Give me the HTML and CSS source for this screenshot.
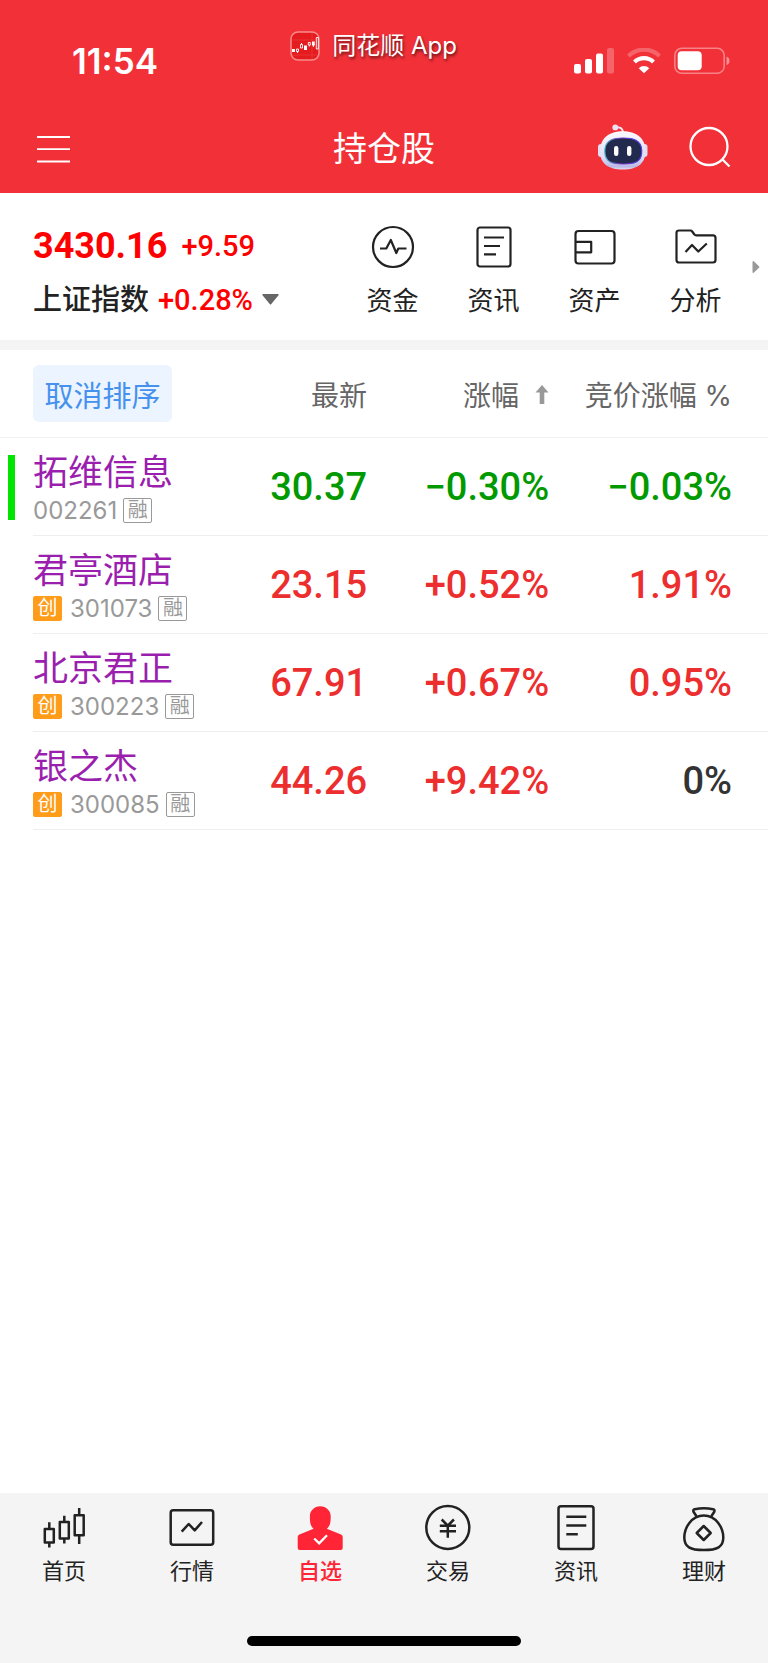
FILE: index.html
```html
<!doctype html>
<html lang="zh-CN">
<head>
	<meta charset="UTF-8">
	<meta name="viewport" content="width=device-width, initial-scale=1">
	<title>持仓股</title>
	<link rel="stylesheet" href="styles.css">
</head>
<body>
	<header class="header">
		<div class="status">
			<span class="status-time">11:54</span>
			<div class="status-app">
				<svg class="app-icon" width="30" height="30" viewBox="0 0 30 30" fill="none">
					<rect x="1" y="1" width="28" height="28" rx="7" fill="#e51c1f" stroke="#f98a8c" stroke-width="1.5"/>
					<path d="M2 9h26M2 24h26M22 2v26" stroke="#ee4446" stroke-width=".5"/>
					<path d="M2 18h3v3H2zM14 14.500h3v4.500h-3zM22 10.500h2.800v4H22z" fill="#fff"/>
					<path d="M6.500 18h2v2.500h-2zM10.500 13.500h2v3.500h-2zM18.300 11.500h2v2.500h-2zM26.300 6.500h2v11.500h-2zM7.500 20.500v1.500M11.500 12v1.500M19.300 14v1.500M23.400 14v2" stroke="#fff" stroke-width=".9"/>
				</svg>
				<span>同花顺 App</span>
			</div>
			<div class="status-icons">
				<svg width="40" height="26" viewBox="0 0 40 26" fill="#fff">
					<rect x="0" y="16" width="7" height="9.500" rx="2"/>
					<rect x="11" y="11" width="7" height="14.500" rx="2"/>
					<rect x="22" y="5.500" width="7" height="20" rx="2"/>
					<rect x="33" y="0" width="7" height="25.500" rx="2" opacity=".25"/>
				</svg>
				<svg width="34" height="26" viewBox="0 0 34 26" fill="none" stroke="#fff" stroke-width="4.200">
					<path d="M1.500 8a22 22 0 0 1 31 0" opacity=".25"/>
					<path d="M7.500 14a13.500 13.500 0 0 1 19 0"/>
					<path d="M17 25.300l-5.300-5.100a7.600 7.600 0 0 1 10.600 0z" fill="#fff" stroke="none"/>
				</svg>
				<svg width="56" height="28" viewBox="0 0 56 28">
					<rect x=".8" y="1.300" width="49.400" height="25" rx="7" fill="none" stroke="#fff" stroke-opacity=".4" stroke-width="1.600"/>
					<rect x="3.700" y="4.200" width="24" height="19" rx="4" fill="#fff"/>
					<path d="M52.500 9.500q3 1 3 4.300t-3 4.300z" fill="#fff" opacity=".45"/>
				</svg>
			</div>
		</div>
		<div class="navbar">
			<button type="button" class="icon-btn" aria-label="菜单">
				<svg width="33" height="28" viewBox="0 0 33 28" stroke="#fff" stroke-width="1.800">
					<path d="M0 2h33M0 14.200h33M0 26.500h33"/>
				</svg>
			</button>
			<h1 class="title">持仓股</h1>
			<div class="navbar-right">
				<button type="button" class="icon-btn" aria-label="智能助手">
					<svg width="50" height="46" viewBox="0 0 50 46">
						<defs>
							<linearGradient id="shell" x1="0" y1="0" x2="0" y2="1">
								<stop offset="0" stop-color="#fbfaff"/>
								<stop offset=".7" stop-color="#dcdcf5"/>
								<stop offset=".93" stop-color="#b9b9e6"/>
								<stop offset="1" stop-color="#e3e2f6"/>
							</linearGradient>
							<linearGradient id="rim" x1="0" y1="0" x2="1" y2="0">
								<stop offset="0" stop-color="#48b8c8"/>
								<stop offset=".4" stop-color="#7a35c4"/>
								<stop offset="1" stop-color="#5040e8"/>
							</linearGradient>
						</defs>
						<path d="M18.500 3.200q6.500-.5 6.500 6" fill="none" stroke="#f1e6f5" stroke-width="2"/>
						<circle cx="17.300" cy="3.400" r="2.900" fill="#ece2f5"/>
						<rect x="0" y="20" width="6" height="13" rx="3" fill="#dfdef4"/>
						<rect x="43.500" y="20" width="6" height="13" rx="3" fill="#dfdef4"/>
						<path d="M24.800 7.200C38 7.200 47.500 14 47.500 27S39 45.500 24.800 45.500 2 40 2 27 11.500 7.200 24.800 7.200z" fill="url(#shell)"/>
						<path d="M25.300 14c9 0 18.500 1.500 18.500 13s-7.300 13-18.500 13S6.800 38.500 6.800 27s9.200-13 18.500-13z" fill="#222b4e" stroke="url(#rim)" stroke-width="1.200"/>
						<rect x="16" y="22" width="4.400" height="10" rx="2.200" fill="#fff"/>
						<rect x="29" y="22" width="4.400" height="10" rx="2.200" fill="#fff"/>
					</svg>
				</button>
				<button type="button" class="icon-btn" aria-label="搜索">
					<svg width="42" height="42" viewBox="0 0 42 42" fill="none" stroke="#fff" stroke-width="2.300">
						<circle cx="20" cy="20.500" r="18.500"/>
						<path d="M33 33l7.500 7.500"/>
					</svg>
				</button>
			</div>
		</div>
	</header>

	<main class="main">
		<section class="summary">
			<div class="index">
				<p class="index-line"><strong class="index-value">3430.16</strong><span class="index-diff">+9.59</span></p>
				<button type="button" class="index-line index-switch">
					<span class="index-name">上证指数</span>
					<span class="index-diff">+0.28%</span>
					<svg width="17" height="11" viewBox="0 0 17 11" fill="#666"><path d="M1 0h15q1.200.2.500 1.200L9.300 10q-.8 1-1.600 0L.5 1.200Q0 .2 1 0z"/></svg>
				</button>
			</div>
			<nav class="shortcuts">
				<a href="#" class="shortcut">
					<svg class="line-icon" width="44" height="44" viewBox="0 0 44 44">
						<circle cx="22" cy="22" r="20"/>
						<path d="M9 23.500h6.300l4.500-8.500 5.500 13 2-4.500h8.200"/>
					</svg>
					<span>资金</span>
				</a>
				<a href="#" class="shortcut">
					<svg class="line-icon" width="44" height="44" viewBox="0 0 44 44">
						<rect x="5.500" y="2.500" width="33" height="39" rx="2.500"/>
						<path d="M12 12.500h20M12 21h16M12 29.300h12"/>
					</svg>
					<span>资讯</span>
				</a>
				<a href="#" class="shortcut">
					<svg class="line-icon" width="44" height="44" viewBox="0 0 44 44">
						<rect x="2.500" y="6" width="39" height="32.500" rx="3"/>
						<path d="M3 16.800h15.200v10.500H3"/>
					</svg>
					<span>资产</span>
				</a>
				<a href="#" class="shortcut">
					<svg class="line-icon" width="44" height="44" viewBox="0 0 44 44">
						<path d="M5 5.500h11.500q1 0 1.700 1l2.200 3q.6.900 1.800.900H39q2.500 0 2.500 2.500V35q0 2.500-2.500 2.500H5Q2.500 37.500 2.500 35V8Q2.500 5.500 5 5.500z"/>
						<path d="M11.500 27l6.500-7 6.300 6.500 8.500-8"/>
					</svg>
					<span>分析</span>
				</a>
			</nav>
			<button type="button" class="icon-btn" aria-label="更多">
				<svg width="8" height="12" viewBox="0 0 8 12" fill="#999"><path d="M.5.500q.8-.8 1.500 0l5 4.700q.8.800 0 1.600l-5 4.700q-.8.800-1.500 0z"/></svg>
			</button>
		</section>

		<table class="stocks">
			<colgroup>
				<col class="col-mark">
				<col>
				<col class="col-price">
				<col class="col-change">
				<col class="col-auction">
			</colgroup>
			<thead>
				<tr>
					<td></td>
					<td class="left"><button type="button" class="sort-cancel">取消排序</button></td>
					<th scope="col">最新</th>
					<th scope="col">涨幅<svg class="sort-arrow" width="14" height="19" viewBox="0 0 14 19" fill="#999"><path d="M7 0l6.500 7.500H9.300V19H4.700V7.500H.5z"/></svg></th>
					<th scope="col" class="last">竞价涨幅 %</th>
				</tr>
			</thead>
			<tbody>
				<tr class="down">
					<td class="mark"><span class="mark-bar"></span></td>
					<th scope="row">
						<div class="stock-name">拓维信息</div>
						<div class="stock-code">002261<span class="tag tag-margin">融</span></div>
					</th>
					<td>30.37</td>
					<td>−0.30%</td>
					<td class="last">−0.03%</td>
				</tr>
				<tr class="up">
					<td class="mark"></td>
					<th scope="row">
						<div class="stock-name">君亭酒店</div>
						<div class="stock-code"><span class="tag tag-gem">创</span>301073<span class="tag tag-margin">融</span></div>
					</th>
					<td>23.15</td>
					<td>+0.52%</td>
					<td class="last">1.91%</td>
				</tr>
				<tr class="up">
					<td class="mark"></td>
					<th scope="row">
						<div class="stock-name">北京君正</div>
						<div class="stock-code"><span class="tag tag-gem">创</span>300223<span class="tag tag-margin">融</span></div>
					</th>
					<td>67.91</td>
					<td>+0.67%</td>
					<td class="last">0.95%</td>
				</tr>
				<tr class="up">
					<td class="mark"></td>
					<th scope="row">
						<div class="stock-name">银之杰</div>
						<div class="stock-code"><span class="tag tag-gem">创</span>300085<span class="tag tag-margin">融</span></div>
					</th>
					<td>44.26</td>
					<td>+9.42%</td>
					<td class="last flat">0%</td>
				</tr>
			</tbody>
		</table>
	</main>

	<footer class="footer">
		<nav class="tabs">
			<a href="#" class="tab">
				<svg class="line-icon" width="48" height="48" viewBox="0 0 48 48">
					<path d="M4.800 25h9v13.500h-9zM19.800 18h9v16.500h-9zM34.700 11.200h9v20h-9zM9.300 18.300V25M9.300 38.500v5M24.300 11.700V18M24.300 34.500v5M39.200 4v7.200M39.200 31.200V40"/>
				</svg>
				<span>首页</span>
			</a>
			<a href="#" class="tab">
				<svg class="line-icon" width="48" height="48" viewBox="0 0 48 48">
					<rect x="2.700" y="6.300" width="42.500" height="34.500" rx="2.500"/>
					<path d="M13.700 27.700l7-7.700 6 6.300 7.300-8.300"/>
				</svg>
				<span>行情</span>
			</a>
			<a href="#" class="tab active">
				<svg width="48" height="48" viewBox="0 0 48 48">
					<path d="M24.200 2.300c6 0 10.500 4.300 10.500 10.200 0 6.500-.7 9.500-3.900 12.300l14.200 5.700q1.700.8 1.700 2.500v11q0 2-2 2h-41q-2 0-2-2V33q0-1.700 1.700-2.500l14.200-5.700c-3.200-2.800-3.700-5.800-3.700-12.300 0-5.900 4.300-10.200 10.300-10.200z" fill="#ff2436"/>
					<path d="M18.200 34.500l5 4.800 7.800-8" fill="none" stroke="#fff" stroke-width="2.300"/>
				</svg>
				<span>自选</span>
			</a>
			<a href="#" class="tab">
				<svg class="line-icon" width="48" height="48" viewBox="0 0 48 48">
					<circle cx="23.800" cy="23.500" r="21.500"/>
					<path d="M17.700 15.500l6.100 6.200 6.100-6.200M15.800 21.700h16.200M15.800 27.200h16.200M23.800 21.700v12"/>
				</svg>
				<span>交易</span>
			</a>
			<a href="#" class="tab">
				<svg class="line-icon" width="48" height="48" viewBox="0 0 48 48">
					<rect x="6.500" y="2.300" width="35" height="42.700" rx="2.500"/>
					<path d="M14.300 12.700h20M14.300 21.400h20M14.300 30.300h11.500"/>
				</svg>
				<span>资讯</span>
			</a>
			<a href="#" class="tab">
				<svg class="line-icon" width="48" height="48" viewBox="0 0 48 48">
					<path d="M16.500 12.300l-3-4.600q-.8-2 1.200-2.500 9.200-1.700 18.400 0 2 .5 1.200 2.500l-3 4.600"/>
					<path d="M23.800 11.500c12.500 0 19.500 12.500 19.500 22 0 9.500-6 12.500-19.500 12.500S4.300 43 4.300 33.500c0-9.500 7-22 19.500-22z"/>
					<path d="M23.700 22l7 7-7 7-7-7z"/>
				</svg>
				<span>理财</span>
			</a>
		</nav>
		<div class="home-bar"></div>
	</footer>
</body>
</html>
```
FILE: styles.css
```css
*{box-sizing:border-box;}
body{display:flex;flex-direction:column;min-height:100vh;margin:0;background:#fff;color:#222;font-family:Inter,"Noto Sans CJK SC",sans-serif;}
h1,p{margin:0;}
svg{display:block;flex:none;}
a{color:inherit;text-decoration:none;}
button{padding:0;border:0;background:none;color:inherit;font:inherit;cursor:pointer;}

/* 顶部 */
.header{background:#f23038;color:#fff;}
.status{display:grid;grid-template-columns:1fr auto 1fr;height:105px;}
.status-time{padding:41px 0 0 72px;font-size:35px;line-height:40px;font-weight:600;}
.status-app{display:flex;align-items:center;gap:12px;height:30px;margin-top:31px;padding-right:21px;font-size:24px;line-height:30px;text-shadow:1px 2px 3px rgba(0,0,0,.6);}
.status-icons{display:flex;justify-content:flex-end;align-items:center;gap:13px;height:28px;margin-top:47px;padding-right:38px;}
.navbar{display:grid;grid-template-columns:1fr auto 1fr;align-items:center;height:88px;padding:0 37px;}
.navbar-right{display:flex;justify-content:flex-end;align-items:center;gap:41px;padding-bottom:4px;}
.title{font-size:34px;line-height:48px;font-weight:400;}

/* 指数与快捷入口 */
.summary{display:flex;align-items:center;height:157px;padding:0 8px 0 33px;border-bottom:10px solid #f4f4f4;}
.index{flex:1;padding-top:12px;}
.index-line{display:flex;align-items:center;height:54px;line-height:54px;}
.index-value{margin-right:14px;font-family:Roboto,sans-serif;font-size:36px;font-weight:700;color:#f00;}
.index-diff{font-family:Roboto,sans-serif;font-size:29px;font-weight:500;color:#f00;}
.index-switch{gap:9px;}
.index-name{font-size:29px;font-weight:500;}
.shortcuts{display:flex;padding-top:10px;}
.shortcut{display:flex;flex-direction:column;align-items:center;gap:14px;width:101px;font-size:26px;line-height:36px;}
.line-icon{fill:none;stroke:#222;stroke-width:2.2;stroke-linejoin:round;}
.summary .icon-btn{margin-left:6px;}

/* 自选列表 */
.stocks{width:100%;border-collapse:separate;border-spacing:0;table-layout:fixed;}
.col-mark{width:33px;}
.col-price{width:18%;}
.col-change{width:23.7%;}
.col-auction{width:28.5%;}
.stocks th,.stocks td{padding:0;text-align:right;vertical-align:middle;white-space:nowrap;}
.stocks .left,.stocks tbody th{text-align:left;}
.stocks .last{padding-right:36px;}
.stocks thead th,.stocks thead td{height:88px;border-bottom:1px solid #f2f2f2;font-size:28px;font-weight:400;color:#666;}
.sort-cancel{width:139px;height:57px;border-radius:6px;background:#ebf4ff;color:#4691ee;font-size:29px;}
.sort-arrow{display:inline-block;margin-left:16px;vertical-align:2px;}
.stocks tbody th,.stocks tbody td{height:98px;border-bottom:1px solid #eee;}
.stocks tbody td{font-family:Roboto,sans-serif;font-size:38px;font-weight:500;}
.stocks tbody .mark{border-bottom:0;}
.mark-bar{display:block;width:7px;height:65px;margin-left:8px;background:#00e600;}
.up td{color:#ed2e2e;}
.down td{color:#009a00;}
.up .flat{color:#333;}
.stock-name{font-size:35px;line-height:44px;font-weight:400;color:#9b1fae;}
.stock-code{display:flex;align-items:center;height:25px;margin-top:4px;font-size:24px;line-height:25px;font-weight:400;color:#999;}
.tag{width:29px;height:25px;border-radius:2px;font-size:20px;line-height:23px;text-align:center;}
.tag-gem{margin-right:8px;border:1px solid #ff9c1a;background:#ff9c1a;color:#fff;}
.tag-margin{margin-left:6px;border:1px solid #999;}

/* 底部导航 */
.main{flex:1;}
.footer{background:#f4f4f4;}
.tabs{display:flex;height:143px;padding-top:11px;}
.tab{display:flex;flex:1;flex-direction:column;align-items:center;gap:4px;font-size:22px;line-height:30px;}
.tab .line-icon{stroke-width:2.5;}
.tab.active{color:#ff2436;font-weight:500;}
.home-bar{width:274px;height:10px;margin:0 auto 17px;border-radius:5px;background:#000;}
```
